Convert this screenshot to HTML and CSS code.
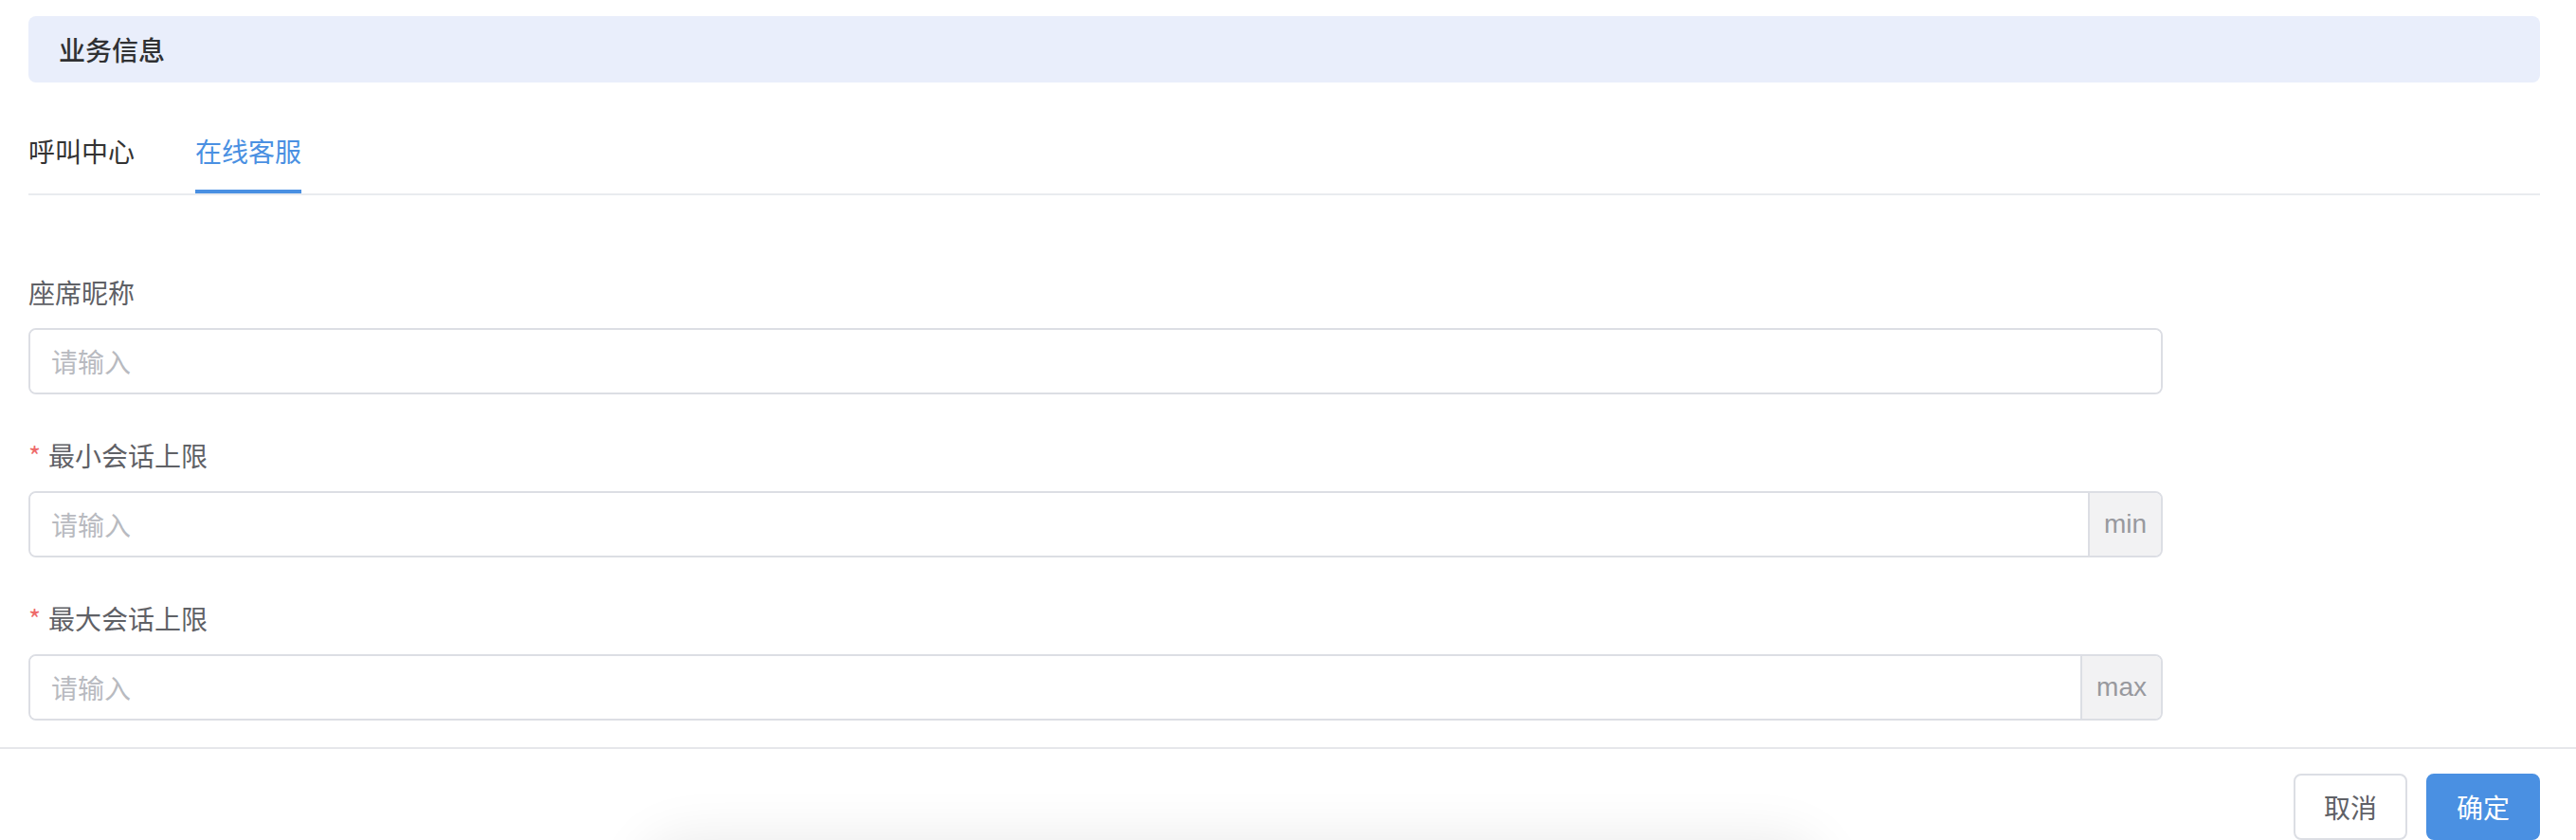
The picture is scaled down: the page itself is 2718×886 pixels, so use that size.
FILE: index.html
```html
<!DOCTYPE html>
<html lang="zh-CN">
<head>
<meta charset="utf-8">
<title>业务信息</title>
<link rel="stylesheet" href="styles.css">
</head>
<body>
<div class="dialog">
  <div class="dialog-body">
    <div class="section-title">业务信息</div>
    <div class="tabs">
      <div class="tab">呼叫中心</div>
      <div class="tab active">在线客服</div>
    </div>
    <form class="form">
      <div class="form-item">
        <label class="form-label">座席昵称</label>
        <div class="input-group">
          <input class="input" type="text" placeholder="请输入">
        </div>
      </div>
      <div class="form-item">
        <label class="form-label"><span class="required">*</span>最小会话上限</label>
        <div class="input-group">
          <input class="input" type="text" placeholder="请输入">
          <span class="addon">min</span>
        </div>
      </div>
      <div class="form-item">
        <label class="form-label"><span class="required">*</span>最大会话上限</label>
        <div class="input-group">
          <input class="input" type="text" placeholder="请输入">
          <span class="addon">max</span>
        </div>
      </div>
    </form>
  </div>
  <div class="dialog-footer">
    <button class="btn btn-default" type="button">取消</button>
    <button class="btn btn-primary" type="button">确定</button>
  </div>
</div>
<div class="shadow-clip"><div class="floating-shadow"></div></div>
</body>
</html>
```

FILE: styles.css
```css
html, body {
  margin: 0;
  padding: 0;
  background: #ffffff;
  overflow: hidden;
  height: 886px;
}

body {
  font-family: "Noto Sans CJK SC", "Noto Sans", "Liberation Sans", sans-serif;
  color: #333333;
  position: relative;
}

.dialog-body {
  padding: 17px 38px 0 30px;
}

.section-title {
  height: 70px;
  line-height: 70px;
  background: #e9eefb;
  border-radius: 8px;
  padding-left: 32px;
  font-size: 28px;
  color: #303133;
  font-weight: 500;
}

.tabs {
  display: flex;
  gap: 64px;
  margin-top: 52px;
  border-bottom: 2px solid #e9ebef;
}

.tab {
  font-size: 28px;
  line-height: 40px;
  padding-bottom: 21px;
  border-bottom: 4px solid transparent;
  color: #333333;
}

.tab.active {
  color: #4a90e2;
  border-bottom-color: #4a90e2;
}

.form {
  width: 2252px;
  padding-top: 82px;
}

.form-item {
  margin-bottom: 44px;
}

.form-item:last-child {
  margin-bottom: 0;
}

.form-label {
  display: flex;
  align-items: center;
  height: 40px;
  font-size: 28px;
  color: #5f6166;
  margin-bottom: 18px;
}

.required {
  color: #ee6a6a;
  margin-right: 8px;
  font-size: 28px;
}

.input-group {
  display: flex;
  height: 70px;
  box-sizing: border-box;
  border: 2px solid #dcdee4;
  border-radius: 8px;
  overflow: hidden;
}

.input {
  flex: 1;
  min-width: 0;
  border: none;
  outline: none;
  padding: 0 22px;
  font-family: inherit;
  font-size: 28px;
  color: #333;
  background: #fff;
}

.input::placeholder {
  color: #b8bac0;
}

.addon {
  display: flex;
  align-items: center;
  padding: 0 15px;
  background: #f2f2f3;
  border-left: 2px solid #dcdee4;
  color: #98999e;
  font-size: 28px;
  font-family: "Liberation Sans", "Noto Sans", sans-serif;
}

.dialog-footer {
  margin-top: 28px;
  border-top: 2px solid #e6e7eb;
  padding: 26px 38px 0 0;
  display: flex;
  justify-content: flex-end;
  gap: 20px;
}

.btn {
  width: 120px;
  height: 70px;
  border-radius: 8px;
  font-family: inherit;
  font-size: 28px;
  box-sizing: border-box;
  cursor: pointer;
}

.btn-default {
  background: #fff;
  border: 2px solid #dcdee4;
  color: #5f6166;
}

.btn-primary {
  background: #4a90e2;
  border: 2px solid #4a90e2;
  color: #fff;
}

.shadow-clip {
  position: absolute;
  left: 0;
  right: 0;
  bottom: 0;
  height: 70px;
  overflow: hidden;
  pointer-events: none;
}

.floating-shadow {
  position: absolute;
  left: 700px;
  top: 90px;
  width: 1200px;
  height: 100px;
  background: #fff;
  box-shadow: 0 0 60px 20px rgba(0, 0, 0, 0.09);
  border-radius: 20px;
}
```
